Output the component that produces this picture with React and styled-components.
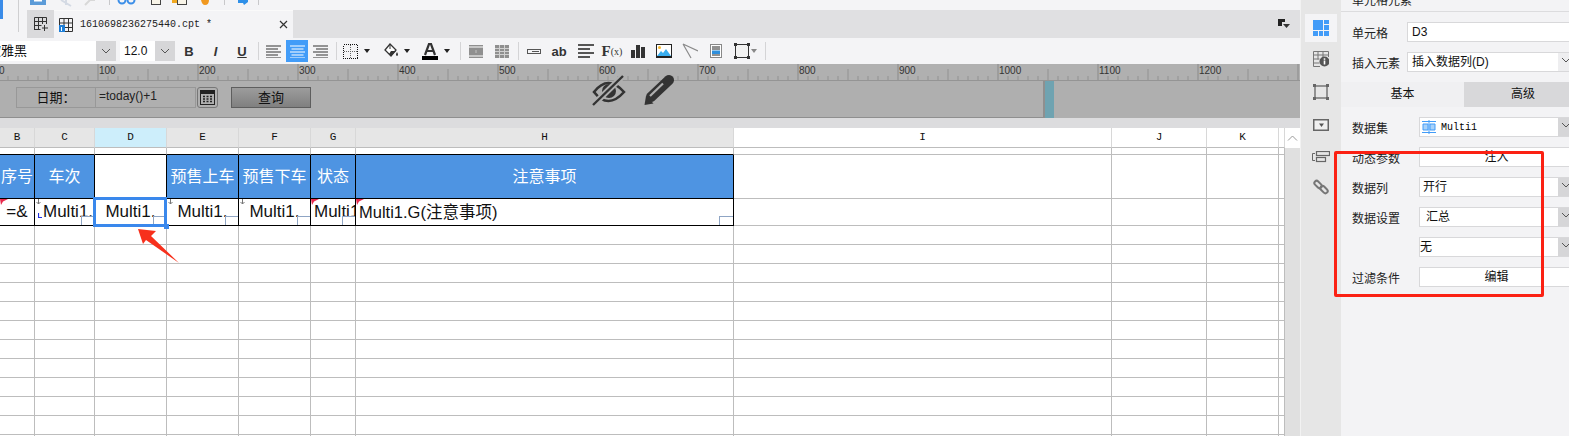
import React from 'react';
import styled, { createGlobalStyle } from 'styled-components';

const Global = createGlobalStyle`
  html, body { margin: 0; padding: 0; width: 1569px; height: 436px; overflow: hidden; background: #f4f4f6; }
  body { font-family: "Liberation Sans", "Noto Sans CJK SC", sans-serif; color: #222; }
  * { box-sizing: border-box; }
`;

const Frame = styled.div`
  position: relative;
  display: flex;
  width: 1569px;
  height: 436px;
  overflow: hidden;
`;
const Main = styled.div`
  width: 1300px;
  display: flex;
  flex-direction: column;
  flex: none;
`;
const TopStrip = styled.div`
  height: 10px;
  overflow: hidden;
  background: #f4f4f6;
  line-height: 0;
`;
const TabBar = styled.div`
  height: 28px;
  display: flex;
  background: #e0e0e2;
`;
const TabGutter = styled.div`
  width: 27px;
  background: #f4f4f6;
  line-height: 0;
`;
const AddTab = styled.div`
  width: 27px;
  background: #dadadc;
  display: flex;
  align-items: center;
  justify-content: center;
`;
const ActiveTab = styled.div`
  width: 239px;
  background: #f4f4f6;
  border-top: 1px solid #fafafa;
  display: flex;
  align-items: center;
  padding: 0 5px;
  gap: 7px;
`;
const TabName = styled.span`
  flex: 1;
  font: 10px "Liberation Mono", monospace;
  color: #222;
`;
const TabSpacer = styled.div`
  flex: 1;
  display: flex;
  justify-content: flex-end;
  padding: 9px 10px 0 0;
`;
const FormatBar = styled.div`
  height: 26px;
  display: flex;
  align-items: center;
  background: #f4f4f6;
`;
const Combo = styled.div`
  height: 20px;
  width: ${p => p.$w}px;
  margin-left: ${p => p.$ml || 0}px;
  display: flex;
  background: #fff;
  overflow: hidden;
  flex: none;
`;
const ComboText = styled.div`
  flex: 1;
  min-width: 0;
  white-space: nowrap;
  font-size: ${p => p.$size}px;
  line-height: 20px;
  margin-left: ${p => p.$ml || 0}px;
  color: #111;
`;
const ComboArrow = styled.div`
  width: 20px;
  flex: none;
  background: #d6d6d8;
  display: flex;
  align-items: center;
  justify-content: center;
`;
const Tool = styled.div`
  width: ${p => p.$w}px;
  margin-left: ${p => p.$ml || 0}px;
  height: 22px;
  flex: none;
  display: flex;
  align-items: center;
  justify-content: center;
  background: ${p => (p.$on ? '#429cf8' : 'transparent')};
`;
const Letter = styled.span`
  font: ${p => p.$style || 'bold'} 13px "Liberation Sans", sans-serif;
  color: #333;
  text-decoration: ${p => (p.$under ? 'underline' : 'none')};
`;
const FxBig = styled.span`
  font: bold 15px "Liberation Serif", serif;
  color: #333;
`;
const FxSmall = styled.span`
  font: 10px "Liberation Serif", serif;
  color: #333;
`;
const ToolSep = styled.div`
  width: ${p => p.$w}px;
  margin-left: ${p => p.$ml || 0}px;
  height: 18px;
  flex: none;
  display: flex;
  justify-content: center;
  &::after { content: ''; width: 1px; background: #d4d4d6; }
`;
const RulerBar = styled.div`
  height: 17px;
  background: #b0b0b0;
  line-height: 0;
  overflow: hidden;
`;
const Band = styled.div`
  height: 37px;
  display: flex;
  background: #afafaf;
`;
const ParamCanvas = styled.div`
  width: 1045px;
  flex: none;
  display: flex;
  align-items: flex-start;
  padding: 6px 0 0 16px;
  border-right: 2px solid #8f8f8f;
  border-bottom: 1px solid #8f8f8f;
`;
const TealHandle = styled.div`
  width: 9px;
  background: #6fa3b1;
`;
const ParamLabel = styled.div`
  width: 80px;
  height: 21px;
  border: 1px solid #989898;
  background: #adadad;
  font-size: 13px;
  line-height: 20px;
  text-align: center;
  color: #111;
`;
const ParamInput = styled.div`
  width: 100px;
  height: 21px;
  border: 1px solid #989898;
  border-left: none;
  padding-left: 3px;
  font-size: 12px;
  line-height: 17px;
  color: #222;
`;
const CalendarBtn = styled.div`
  width: 21px;
  height: 21px;
  margin-left: 1px;
  border: 1px solid #777;
  border-radius: 3px;
  display: flex;
  align-items: center;
  justify-content: center;
`;
const QueryBtn = styled.div`
  width: 80px;
  height: 21px;
  margin-left: 13px;
  border: 1px solid #5e5e5e;
  background: linear-gradient(#9c9c9c, #808080);
  font-size: 13px;
  line-height: 19px;
  text-align: center;
  color: #111;
`;
const Gap = styled.div`
  height: 10px;
  background: #dcdcde;
`;
const Sheet = styled.div`
  flex: 1;
  display: flex;
  min-height: 0;
  overflow: hidden;
  background: #fff;
`;
const GridWrap = styled.div`
  width: 1285px;
  flex: none;
  overflow: hidden;
`;
const Grid = styled.div`
  display: grid;
  grid-template-columns: 35px 60px 72px 72px 72px 45px 378px 378px 95px 72px 6px;
  grid-template-rows: 20px 7px 44px 27px;
  grid-auto-rows: 19px;
`;
const ColHead = styled.div`
  background: ${p => p.$bg};
  border-right: 1px solid ${p => p.$line};
  border-bottom: 1px solid #bdbdbd;
  font: 11px/19px "Liberation Mono", monospace;
  color: #111;
  text-align: center;
`;
const Cell = styled.div`
  position: relative;
  z-index: ${p => (p.$visible ? 2 : 'auto')};
  background: ${p => p.$bg || '#fff'};
  border-right: 1px solid ${p => (p.$black ? '#000' : '#bdbdbd')};
  border-bottom: 1px solid ${p => (p.$blackB ? '#000' : '#bdbdbd')};
  color: ${p => p.$color || '#111'};
  font-size: ${p => p.$fs || 17}px;
  line-height: ${p => p.$lh || 26}px;
  text-align: ${p => p.$align || 'center'};
  padding-left: ${p => p.$pl || 0}px;
  white-space: nowrap;
  overflow: ${p => (p.$visible ? 'visible' : 'hidden')};
`;
const Expand = styled.i`
  position: absolute;
  right: 0;
  bottom: 0;
  width: ${p => p.$w || 13}px;
  height: 9px;
  border: 1px solid #8fa5c4;
  border-right: none;
  border-bottom: none;
`;
const Mark = styled.svg`
  position: absolute;
  left: ${p => p.$l || 0}px;
  top: ${p => p.$t || 0}px;
`;
const Selection = styled.div`
  position: absolute;
  left: -2px;
  top: -2px;
  right: -1px;
  bottom: -2px;
  border: 3px solid #3a88ec;
  &::after {
    content: '';
    position: absolute;
    right: -5px;
    bottom: -5px;
    width: 5px;
    height: 5px;
    background: #3a88ec;
  }
`;
const ScrollTrack = styled.div`
  width: 15px;
  flex: none;
  background: #e0e0e0;
`;
const ScrollUp = styled.div`
  height: 20px;
  background: #fff;
  display: flex;
  align-items: center;
  justify-content: center;
`;
const Rail = styled.div`
  width: 41px;
  flex: none;
  background: #e6e6e6;
  border-left: 1px solid #f2f2f2;
  display: flex;
  flex-direction: column;
  align-items: center;
  padding-top: 14px;
`;
const RailItem = styled.div`
  width: 32px;
  height: ${p => p.$h}px;
  flex: none;
  display: flex;
  align-items: center;
  justify-content: center;
  background: ${p => (p.$on ? '#f4f4f6' : 'transparent')};
`;
const Panel = styled.div`
  flex: 1;
  min-width: 0;
  background: #f3f3f5;
  overflow: hidden;
`;
const PanelTitle = styled.div`
  height: 12px;
  overflow: hidden;
  border-bottom: 1px solid #dcdcde;
  padding-left: 11px;
  font-size: 12px;
  line-height: 14px;
  & > span { display: block; margin-top: -6px; }
`;
const Rows = styled.div`
  display: flex;
  flex-direction: column;
  gap: 10px;
  padding: ${p => p.$pt}px 0 0 10px;
  margin-right: -10px;
`;
const Row = styled.div`
  height: 20px;
  display: flex;
  align-items: center;
`;
const RowLabel = styled.div`
  width: ${p => p.$w}px;
  flex: none;
  padding-left: 1px;
  font-size: 12px;
  color: #222;
`;
const Field = styled.div`
  flex: 1;
  height: 20px;
  display: flex;
  background: #fff;
  border: 1px solid #d8d8da;
  border-right: none;
`;
const FieldText = styled.div`
  flex: 1;
  display: flex;
  align-items: center;
  gap: 5px;
  padding-left: ${p => p.$pl ?? 4}px;
  padding-right: ${p => p.$pr || 0}px;
  justify-content: ${p => (p.$center ? 'center' : 'flex-start')};
  font-size: 12px;
  line-height: 18px;
  color: #111;
`;
const MonoName = styled.span`
  font: 10px "Liberation Mono", monospace;
  color: #000;
`;
const FieldArrow = styled.div`
  width: 21px;
  flex: none;
  background: ${p => p.$bg || '#d6d6d8'};
  padding: 4px 0 0 3px;
  line-height: 0;
`;
const Tabs = styled.div`
  display: flex;
  height: 25px;
  margin-top: 10px;
`;
const PanelTab = styled.div`
  width: ${p => p.$w}px;
  flex: none;
  background: ${p => (p.$on ? '#f0f0f2' : '#d8d8da')};
  font-size: 12px;
  line-height: 25px;
  text-align: center;
  color: #111;
`;
const RedBox = styled.div`
  position: absolute;
  left: 1334px;
  top: 151px;
  width: 210px;
  height: 146px;
  border: 3px solid #fb2113;
  border-radius: 2px;
  pointer-events: none;
`;
const Overlay = styled.svg`
  position: absolute;
  left: ${p => p.$l}px;
  top: ${p => p.$t}px;
  pointer-events: none;
`;

const Chevron = ({ c = '#555' }) => (
  <svg width="10" height="6" viewBox="0 0 10 6"><path d="M1 1l4 4 4-4" fill="none" stroke={c} /></svg>
);
const Drop = () => (
  <svg width="6" height="4" viewBox="0 0 6 4"><path d="M0 0h6L3 4z" fill="#222" /></svg>
);
const Lines = ({ on, mode }) => {
  const c = on ? '#fff' : '#333';
  const rows = [[0, 15], [1, 12], [0, 15], [1, 12], [0, 15]];
  return (
    <svg width="15" height="13" viewBox="0 0 15 13">
      {rows.map(([s, w], i) => {
        const x = mode === 'l' ? 0 : mode === 'r' ? 15 - w : (15 - w) / 2;
        return <rect key={i} x={x} y={i * 3 + 0.5} width={w} height="1" fill={c} />;
      })}
    </svg>
  );
};
const GridGlyph = ({ blue }) => (
  <svg width="14" height="14" viewBox="0 0 14 14">
    <path d="M.5.5h13v13H.5zM.5 5h13M.5 9.500h13M5 .5v13M9.500.5v13" fill="none" stroke="#333" />
    {blue && <path d="M0 7h6v7H0z" fill="#1f7fd8" />}
    {blue && <path d="M2 9h1v4H2z" fill="#fff" />}
  </svg>
);
const AddGlyph = () => (
  <svg width="14" height="14" viewBox="0 0 14 14">
    <path d="M.5 13V.5h12V7M.5 4.500h12M.5 8.500h7M4.500.5v12M8.500.5V7M.5 12.500h6M10.500 8v6M8 11h6" fill="none" stroke="#333" />
  </svg>
);

const Ruler = () => {
  const ticks = [];
  for (let v = 0; v <= 1300; v += 10) {
    const x = v - 2.5;
    const h = v % 100 === 0 ? 16 : v % 50 === 0 ? 11 : 4;
    ticks.push(<rect key={v} x={x} y={16 - h} width="1" height={h} fill={v % 100 === 0 ? '#8a8a8a' : '#929292'} />);
  }
  const labels = [];
  for (let v = 0; v <= 1200; v += 100) {
    labels.push(<text key={v} x={v - 1} y="10" fontSize="10" fontFamily="Liberation Sans, sans-serif" fill="#333">{v}</text>);
  }
  return (
    <svg width="1300" height="17">
      <rect x="0" y="16" width="1300" height="1" fill="#949494" />
      {ticks}
      {labels}
    </svg>
  );
};

const columns = [
  { id: 'B' }, { id: 'C' }, { id: 'D', sel: true }, { id: 'E' }, { id: 'F' }, { id: 'G' }, { id: 'H' },
  { id: 'I', plain: true }, { id: 'J', plain: true }, { id: 'K', plain: true }, { id: '', plain: true },
];
const titles = ['序号', '车次', '', '预售上车', '预售下车', '状态', '注意事项'];
const Flag = ({ l = 0 }) => (
  <Mark $l={l} width="8" height="6" viewBox="0 0 8 6"><path d="M0 0h8L3 2.500 1 6z" fill="#e82a4c" /></Mark>
);
const DownMark = ({ l = 1 }) => (
  <Mark $l={l} width="5" height="6" viewBox="0 0 5 6"><path d="M2.500 0v5M.5 3l2 2 2-2" fill="none" stroke="#777" /></Mark>
);
const BlueTick = () => (
  <Mark $l={3} $t={14} width="4" height="5" viewBox="0 0 4 5"><path d="M.5 0v4.500H4" fill="none" stroke="#2030e0" strokeWidth="1.200" /></Mark>
);

const BlankRow = ({ n }) => columns.map(c => <Cell key={n + c.id} />);

export default function App() {
  return (
    <Frame>
      <Global />
      <Main>
        <TopStrip>
          <svg width="300" height="10">
            <path d="M0 0h3v10H0z" fill="#3a8be8" />
            <rect x="18" y="0" width="1" height="10" fill="#cfcfd1" />
            <rect x="30" y="-6" width="16" height="11" fill="#5b9bd8" />
            <rect x="34" y="0" width="8" height="1.500" fill="#fff" />
            <path d="M61 0l5 3 5 3M66 0v5" stroke="#d4dae4" strokeWidth="2" fill="none" />
            <path d="M85 5l5-5h5" stroke="#d8d8d8" strokeWidth="2" fill="none" />
            <rect x="109" y="0" width="1" height="5" fill="#c8c8ca" />
            <circle cx="122" cy="0" r="3.500" fill="none" stroke="#3b8ee8" strokeWidth="2" />
            <circle cx="131" cy="0" r="3.500" fill="none" stroke="#3b8ee8" strokeWidth="2" />
            <rect x="151.500" y="-6" width="9" height="10.500" fill="#f8f4e8" stroke="#444" />
            <rect x="172" y="-4" width="10" height="7" fill="#f0a820" />
            <rect x="177.500" y="-3" width="9" height="7.500" fill="#f8f4e8" stroke="#444" />
            <path d="M201 0h8q0 5-4 5-3 0-4-5z" fill="#f09820" />
            <rect x="224" y="0" width="1" height="5" fill="#c8c8ca" />
            <path d="M238 0h10v2l-4 3-1-2h-5z" fill="#2f90e8" />
            <rect x="258" y="0" width="1" height="5" fill="#c8c8ca" />
          </svg>
        </TopStrip>
        <TabBar>
          <TabGutter>
            <svg width="27" height="28">
              <path d="M0 0h3v9H0z" fill="#3a8be8" />
              <rect x="18" y="0" width="1" height="22" fill="#cfcfd1" />
            </svg>
          </TabGutter>
          <AddTab><AddGlyph /></AddTab>
          <ActiveTab>
            <GridGlyph blue />
            <TabName>1610698236275440.cpt *</TabName>
            <svg width="9" height="9" viewBox="0 0 9 9"><path d="M1 1l7 7M8 1L1 8" stroke="#333" strokeWidth="1.200" /></svg>
          </ActiveTab>
          <TabSpacer>
            <svg width="12" height="10" viewBox="0 0 12 10">
              <path d="M0 0h7v3H4v4H0z" fill="#222" />
              <path d="M5 5h7L8.500 9z" fill="#333" />
            </svg>
          </TabSpacer>
        </TabBar>
        <FormatBar>
          <Combo $w={116}>
            <ComboText $size={13} $ml={-25}>微软雅黑</ComboText>
            <ComboArrow><Chevron /></ComboArrow>
          </Combo>
          <Combo $w={55} $ml={4}>
            <ComboText $size={12} $ml={4}>12.0</ComboText>
            <ComboArrow><Chevron /></ComboArrow>
          </Combo>
          <Tool $w={26} $ml={1}><Letter>B</Letter></Tool>
          <Tool $w={27}><Letter $style="italic bold">I</Letter></Tool>
          <Tool $w={26}><Letter $under>U</Letter></Tool>
          <ToolSep $w={6} />
          <Tool $w={25}><Lines mode="l" /></Tool>
          <Tool $w={22} $on><Lines on mode="c" /></Tool>
          <Tool $w={24}><Lines mode="r" /></Tool>
          <ToolSep $w={8} />
          <Tool $w={20}>
            <svg width="15" height="15" viewBox="0 0 15 15" shapeRendering="crispEdges">
              <path d="M.5.5h14v14H.5z" fill="none" stroke="#111" strokeDasharray="1 1" />
              <path d="M.5 7.500h14M7.500.5v14" fill="none" stroke="#666" strokeDasharray="1 1" />
            </svg>
          </Tool>
          <Tool $w={14}><Drop /></Tool>
          <Tool $w={21} $ml={6}>
            <svg width="16" height="16" viewBox="0 0 16 16">
              <path d="M7 1l6 6-5 6-6-6z" fill="#fff" stroke="#333" strokeWidth="1.300" />
              <path d="M7 1v5" stroke="#333" />
              <path d="M8 8h5l-5 5-2-2z" fill="#333" />
              <path d="M14 9q2 3 0 4-2-1 0-4z" fill="#333" />
            </svg>
          </Tool>
          <Tool $w={12}><Drop /></Tool>
          <Tool $w={20} $ml={7}>
            <svg width="16" height="17" viewBox="0 0 16 17">
              <path d="M3 12L7 1h2l4 11M4.500 8h7" fill="none" stroke="#333" strokeWidth="2.200" />
              <rect x="0" y="13" width="16" height="4" fill="#000" />
            </svg>
          </Tool>
          <Tool $w={14}><Drop /></Tool>
          <ToolSep $w={12} />
          <Tool $w={20}>
            <svg width="14" height="13" viewBox="0 0 14 13">
              <rect width="14" height="13" fill="#8f8f8f" />
              <path d="M0 2h14M0 11h14" stroke="#fff" />
              <rect x="6" y="5" width="2" height="3" fill="#a8a8a8" />
            </svg>
          </Tool>
          <Tool $w={20} $ml={6}>
            <svg width="14" height="13" viewBox="0 0 14 13">
              <rect width="14" height="13" fill="#8f8f8f" />
              <path d="M0 3.500h14M0 6.500h14M0 9.500h14M4.500 0v13M9.500 0v13" stroke="#d0d0d0" />
            </svg>
          </Tool>
          <ToolSep $w={12} />
          <Tool $w={20}>
            <svg width="14" height="5" viewBox="0 0 14 5">
              <rect x=".5" y=".5" width="13" height="4" fill="none" stroke="#555" />
              <rect x="5" y="2" width="7" height="1" fill="#555" />
            </svg>
          </Tool>
          <Tool $w={20} $ml={5}><Letter>ab</Letter></Tool>
          <Tool $w={20} $ml={7}>
            <svg width="16" height="14" viewBox="0 0 16 14">
              <path d="M0 0h16v2H0zM0 4h12v2H0zM0 8h16v2H0zM0 12h12v2H0z" fill="#555" />
            </svg>
          </Tool>
          <Tool $w={20} $ml={6}><FxBig>F</FxBig><FxSmall>(x)</FxSmall></Tool>
          <Tool $w={20} $ml={6}>
            <svg width="14" height="13" viewBox="0 0 14 13">
              <path d="M0 5h4v8H0zM5 0h4v13H5zM10 2h4v11h-4z" fill="#333" />
            </svg>
          </Tool>
          <Tool $w={20} $ml={6}>
            <svg width="16" height="14" viewBox="0 0 16 14">
              <rect x=".5" y=".5" width="15" height="13" fill="#fff" stroke="#222" />
              <circle cx="3.500" cy="3.500" r="1.500" fill="#f5b82e" />
              <path d="M1 12l4-5 2 2 3-4 5 7z" fill="#38aef0" />
              <rect x="0" y="12" width="16" height="2" fill="#222" />
            </svg>
          </Tool>
          <Tool $w={20} $ml={6}>
            <svg width="16" height="16" viewBox="0 0 16 16">
              <path d="M1 1l15 7M1 1l8 14" fill="none" stroke="#8a8a8a" strokeWidth="1.200" />
            </svg>
          </Tool>
          <Tool $w={20} $ml={6}>
            <svg width="12" height="14" viewBox="0 0 12 14">
              <rect x=".5" y=".5" width="11" height="13" fill="#fff" stroke="#888" />
              <path d="M2 3h8M2 5h8M2 11h8" stroke="#222" />
              <rect x="2" y="6.500" width="8" height="3.500" fill="#2f8fdc" />
            </svg>
          </Tool>
          <Tool $w={26} $ml={6}>
            <svg width="24" height="16" viewBox="0 0 24 16">
              <rect x="2.500" y="1.500" width="13" height="13" fill="#f2f2f2" stroke="#333" />
              <path d="M1 0h3v3H1zM14 0h3v3h-3zM1 13h3v3H1zM14 13h3v3h-3z" fill="#333" />
              <path d="M18 6h6l-3 4z" fill="#888" />
            </svg>
          </Tool>
          <ToolSep $w={6} $ml={4} />
        </FormatBar>
        <RulerBar><Ruler /></RulerBar>
        <Band>
          <ParamCanvas>
            <ParamLabel>日期：</ParamLabel>
            <ParamInput>=today()+1</ParamInput>
            <CalendarBtn>
              <svg width="15" height="15" viewBox="0 0 15 15">
                <rect x=".5" y=".5" width="14" height="14" fill="none" stroke="#222" />
                <rect x="0" y="1" width="15" height="3" fill="#222" />
                <path d="M3 6.500h2M6.500 6.500h2M10 6.500h2M3 9h2M6.500 9h2M10 9h2M3 11.500h2M6.500 11.500h2M10 11.500h2" stroke="#222" strokeWidth="1.400" />
              </svg>
            </CalendarBtn>
            <QueryBtn>查询</QueryBtn>
          </ParamCanvas>
          <TealHandle />
        </Band>
        <Gap />
        <Sheet>
          <GridWrap>
            <Grid>
              {columns.map(c => (
                <ColHead key={c.id || 'x'} $bg={c.plain ? '#fff' : c.sel ? '#cdeefb' : '#e6e6e6'} $line="#d8d8d8">{c.id}</ColHead>
              ))}
              {columns.map((c, i) => (
                <Cell key={'s' + i} $blackB={i < 7} />
              ))}
              {columns.map((c, i) =>
                i < 7 ? (
                  <Cell
                    key={'h' + i}
                    $bg={i === 2 ? '#fff' : '#4e94e2'}
                    $color="#fff"
                    $black
                    $blackB
                    $lh={44}
                    $fs={16}
                  >
                    {titles[i]}
                  </Cell>
                ) : (
                  <Cell key={'h' + i} />
                )
              )}
              <Cell $black $blackB>=&amp;<Flag /></Cell>
              <Cell $black $blackB $align="left" $pl={8}>Multi1.<DownMark /><BlueTick /><Expand /></Cell>
              <Cell $black $blackB $visible>Multi1.<Expand /><Selection /></Cell>
              <Cell $black $blackB>Multi1.<DownMark /><Expand /></Cell>
              <Cell $black $blackB>Multi1.<DownMark /><Expand /></Cell>
              <Cell $black $blackB $align="left" $pl={3}>Multi1.<Flag /><Expand /></Cell>
              <Cell $black $blackB $align="left" $pl={3} $fs={16.5}>Multi1.G(注意事项)<Flag /><Expand $w={14} /></Cell>
              <Cell /><Cell /><Cell /><Cell />
              {Array.from({ length: 12 }, (_, n) => <BlankRow key={n} n={n} />)}
            </Grid>
          </GridWrap>
          <ScrollTrack>
            <ScrollUp>
              <svg width="11" height="6" viewBox="0 0 11 6"><path d="M1 5.500l4.500-4.500L10 5.500" fill="none" stroke="#999" /></svg>
            </ScrollUp>
          </ScrollTrack>
        </Sheet>
      </Main>
      <Rail>
        <RailItem $on $h={28}>
          <svg width="16" height="16" viewBox="0 0 16 16">
            <path d="M0 0h10v10H0zM11 0h5v4h-5zM11 5h5v5h-5zM0 11h5v5H0zM6 11h4v5H6zM11 11h5v5h-5z" fill="#429cf8" />
          </svg>
        </RailItem>
        <RailItem $h={34}>
          <svg width="16" height="16" viewBox="0 0 16 16">
            <path d="M.5.500h15V6M.5.500v15H7M.5 4h15M.5 8h6M.5 12h6M5 .500v8M10 .500V6" fill="none" stroke="#777" />
            <circle cx="11.500" cy="10.500" r="5" fill="#555" />
            <rect x="10.700" y="9.500" width="1.600" height="4" fill="#fff" />
            <rect x="10.700" y="7.300" width="1.600" height="1.500" fill="#fff" />
          </svg>
        </RailItem>
        <RailItem $h={32}>
          <svg width="16" height="16" viewBox="0 0 16 16">
            <rect x="2" y="2" width="12" height="12" fill="none" stroke="#666" strokeWidth="1.300" />
            <path d="M0 0h3v3H0zM13 0h3v3h-3zM0 13h3v3H0zM13 13h3v3h-3z" fill="#666" />
          </svg>
        </RailItem>
        <RailItem $h={34}>
          <svg width="16" height="12" viewBox="0 0 16 12">
            <rect x=".75" y=".75" width="14.500" height="10.500" fill="#f0f0f0" stroke="#666" strokeWidth="1.500" />
            <path d="M6 4.500h5L8.500 8z" fill="#555" />
          </svg>
        </RailItem>
        <RailItem $h={30}>
          <svg width="18" height="12" viewBox="0 0 18 12">
            <path d="M3 2.500H.5v7H3" fill="none" stroke="#666" />
            <rect x="4.500" y=".5" width="13" height="4" fill="none" stroke="#666" strokeWidth="1.200" />
            <rect x="4.500" y="6.500" width="9" height="4" fill="none" stroke="#666" strokeWidth="1.200" />
          </svg>
        </RailItem>
        <RailItem $h={30}>
          <svg width="16" height="16" viewBox="0 0 16 16">
            <g fill="none" stroke="#777" strokeWidth="2">
              <rect x="0.800" y="3.200" width="8.500" height="4.500" rx="2.200" transform="rotate(45 5 5.500)" />
              <rect x="6.800" y="8.300" width="8.500" height="4.500" rx="2.200" transform="rotate(45 11 10.500)" />
            </g>
          </svg>
        </RailItem>
      </Rail>
      <Panel>
        <PanelTitle><span>单元格元素</span></PanelTitle>
        <Rows $pt={10}>
          <Row>
            <RowLabel $w={56}>单元格</RowLabel>
            <Field><FieldText>D3</FieldText></Field>
          </Row>
          <Row>
            <RowLabel $w={56}>插入元素</RowLabel>
            <Field>
              <FieldText>插入数据列(D)</FieldText>
              <FieldArrow $bg="#eeeef0"><Chevron /></FieldArrow>
            </Field>
          </Row>
        </Rows>
        <Tabs>
          <PanelTab $w={123} $on>基本</PanelTab>
          <PanelTab $w={118}>高级</PanelTab>
        </Tabs>
        <Rows $pt={10}>
          <Row>
            <RowLabel $w={68}>数据集</RowLabel>
            <Field>
              <FieldText $pl={2}>
                <svg width="14" height="14" viewBox="0 0 14 14">
                  <path d="M1 4h5v6H1zM8 4h5v6H8z" fill="#a8d2fa" stroke="#429cf8" />
                  <path d="M0 1.500h14M0 12.500h14M7 0v14" stroke="#429cf8" />
                </svg>
                <MonoName>Multi1</MonoName>
              </FieldText>
              <FieldArrow><Chevron /></FieldArrow>
            </Field>
          </Row>
          <Row>
            <RowLabel $w={68}>动态参数</RowLabel>
            <Field><FieldText $center $pl={0} $pr={6}>注入</FieldText></Field>
          </Row>
          <Row>
            <RowLabel $w={68}>数据列</RowLabel>
            <Field>
              <FieldText $pl={3}>开行</FieldText>
              <FieldArrow><Chevron /></FieldArrow>
            </Field>
          </Row>
          <Row>
            <RowLabel $w={68}>数据设置</RowLabel>
            <Field>
              <FieldText $pl={6}>汇总</FieldText>
              <FieldArrow><Chevron /></FieldArrow>
            </Field>
          </Row>
          <Row>
            <RowLabel $w={68} />
            <Field>
              <FieldText $pl={0}>无</FieldText>
              <FieldArrow><Chevron /></FieldArrow>
            </Field>
          </Row>
          <Row>
            <RowLabel $w={68}>过滤条件</RowLabel>
            <Field><FieldText $center $pl={0} $pr={6}>编辑</FieldText></Field>
          </Row>
        </Rows>
      </Panel>
      <RedBox />
      <Overlay $l={590} $t={72} width="36" height="36" viewBox="0 0 36 36">
        <path d="M4 20Q18 2 34 20Q18 38 4 20z" fill="none" stroke="#333" strokeWidth="2.600" />
        <circle cx="19" cy="19" r="7" fill="#333" />
        <path d="M3 33L33 4" stroke="#afafaf" strokeWidth="6" />
        <path d="M3 33L33 4" stroke="#333" strokeWidth="2.400" />
      </Overlay>
      <Overlay $l={642} $t={74} width="34" height="34" viewBox="0 0 34 34">
        <path d="M2.500 31l1.500-9 7.500 7.500z" fill="#333" />
        <path d="M9 23L27 6" stroke="#333" strokeWidth="10" strokeLinecap="round" />
        <path d="M8 22L21 9.500" stroke="#afafaf" strokeWidth="2.200" />
      </Overlay>
      <Overlay $l={136} $t={227} width="46" height="38" viewBox="0 0 46 38">
        <path d="M2 2L20 4 15 9 43 36 10 13 7 17z" fill="#f7301c" />
      </Overlay>
    </Frame>
  );
}
